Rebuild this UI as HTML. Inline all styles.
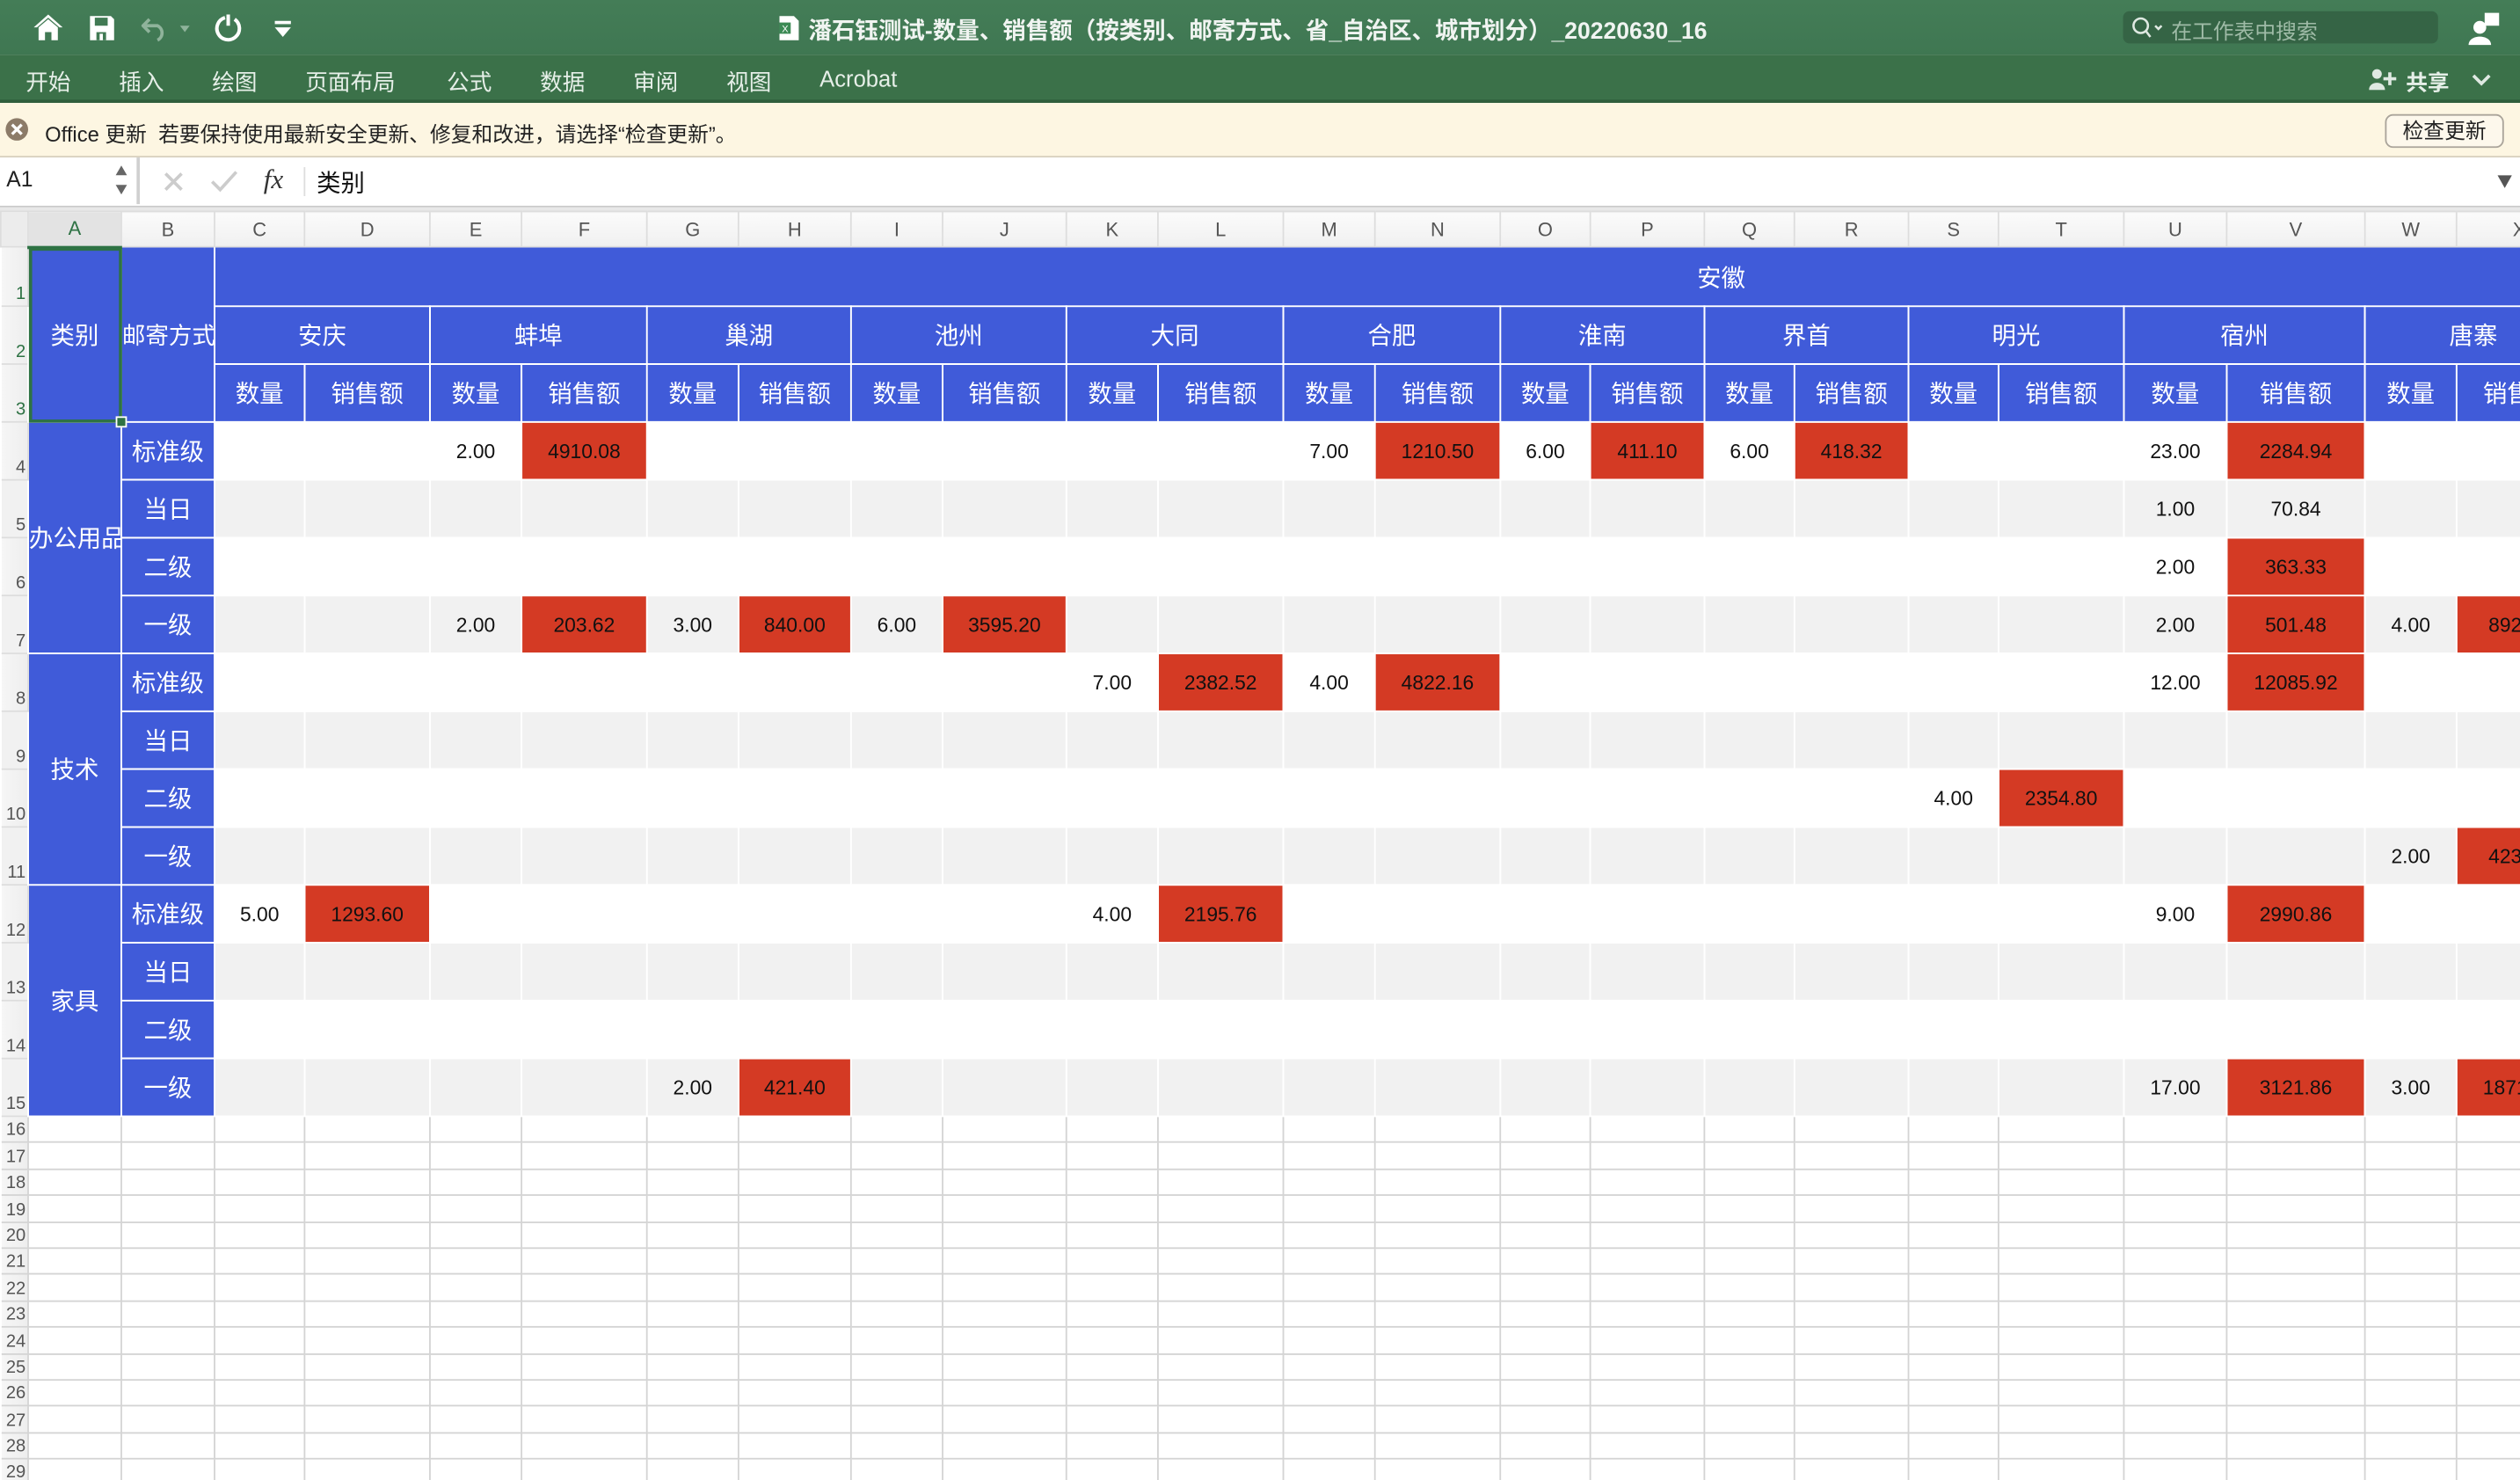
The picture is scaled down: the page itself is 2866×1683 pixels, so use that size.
<!DOCTYPE html>
<html><head><meta charset="utf-8">
<style>
html,body{margin:0;padding:0;width:2866px;height:1682px;overflow:hidden;background:#fff}
.s{position:absolute;left:0;top:0;width:1568px;height:921px;transform:scale(1.82781);transform-origin:0 0;overflow:hidden;font-family:"Liberation Sans","Noto Sans CJK SC",sans-serif}
.tb{position:absolute;left:0;top:0;width:1568px;height:34px;background:linear-gradient(#447d57,#3f7752)}
.rb{position:absolute;left:0;top:34px;width:1568px;height:28px;background:#3b7149;border-bottom:2px solid #2f5e3c}
.rb span{position:absolute;top:7px;color:#e6efe8;font-size:14px}
.mb{position:absolute;left:0;top:64px;width:1568px;height:33px;background:#fdf6e2;border-bottom:1px solid #d6cfbd;font-size:13px;color:#222}
.fb{position:absolute;left:0;top:98px;width:1568px;height:30px;background:#fff;border-bottom:1px solid #c9c9c9}
.gap{position:absolute;left:0;top:129px;width:1568px;height:2px;background:#e8e8e8}
table{position:absolute;left:0;top:131px;border-collapse:collapse;table-layout:fixed;width:1606px}
td{border:1px solid #fff;padding:0;text-align:center;font-size:12.5px;color:#111;overflow:hidden;white-space:nowrap;box-sizing:border-box}
tr.h td{background:linear-gradient(#fbfbfb,#f0f0f0);border:1px solid #ddd;color:#555;font-size:12px;height:22px}
td.rh{background:linear-gradient(90deg,#f6f6f6,#eee);border:1px solid #ddd;border-left:none;color:#555;font-size:11px;text-align:right;vertical-align:bottom;padding:0 1px 1px 0}
td.b{background:#405bd9;color:#fff;font-size:15px}
tr.g td{background:#f1f1f1}
tr.g td.b{background:#405bd9}
td.r{background:#d43a24!important}
tr.e td{height:16.4px;border:1px solid #d4d4d4}
tr.e td.rh{border-left:none}
tr.d td{height:36px}
</style></head><body><div class="s">
<div class="tb">
<svg style="position:absolute;left:20px;top:8px" width="20" height="18" viewBox="0 0 20 18"><path d="M10 1 L1 9 L3 9 L10 3 L17 9 L19 9 Z" fill="#fff"/><path d="M4 9 L10 4 L16 9 V17 H12 V12 H8 V17 H4 Z" fill="#fff"/></svg>
<svg style="position:absolute;left:55px;top:9px" width="17" height="17" viewBox="0 0 17 17"><path d="M1 1 H14 L16 3 V16 H1 Z" fill="#fff"/><rect x="4" y="2" width="8" height="5" fill="#417a54"/><rect x="5" y="11" width="6" height="5" fill="#417a54"/><rect x="7" y="12" width="2" height="4" fill="#fff"/></svg>
<svg style="position:absolute;left:88px;top:9px" width="32" height="17" viewBox="0 0 32 17"><path d="M5 3 L1 7 L5 11 M1 7 H10 A5 5 0 0 1 10 16" stroke="#8fb39b" stroke-width="2" fill="none"/><path d="M24 7 L30 7 L27 11Z" fill="#8fb39b"/></svg>
<svg style="position:absolute;left:132px;top:8px" width="20" height="20" viewBox="0 0 20 20"><path d="M8 3 A7 7 0 1 0 14 4 M10 1 V8" stroke="#fff" stroke-width="2.2" fill="none"/></svg>
<svg style="position:absolute;left:170px;top:12px" width="12" height="12" viewBox="0 0 12 12"><rect x="1" y="1" width="10" height="2" fill="#fff"/><path d="M1 5 H11 L6 11Z" fill="#fff"/></svg>
<svg style="position:absolute;left:484px;top:9px" width="14" height="17" viewBox="0 0 14 17"><path d="M1 1 H10 L13 4 V16 H1Z" fill="#fff"/><rect x="1" y="5" width="7" height="7" fill="#3c8a55"/><text x="2.5" y="11" font-size="6" fill="#fff" font-family="Liberation Sans">X</text></svg>
<div style="position:absolute;left:503px;top:8px;color:#f0f4f1;font-size:14.5px;font-weight:bold">潘石钰测试-数量、销售额（按类别、邮寄方式、省_自治区、城市划分）_20220630_16</div>
<div style="position:absolute;left:1321px;top:7px;width:196px;height:20px;background:#356445;border-radius:4px"></div>
<svg style="position:absolute;left:1326px;top:10px" width="22" height="14" viewBox="0 0 22 14"><circle cx="6" cy="6" r="4.5" stroke="#dfe9e2" stroke-width="1.4" fill="none"/><path d="M9 9 L12 13 M15 6 L17 8 L19 6" stroke="#dfe9e2" stroke-width="1.4" fill="none"/></svg>
<div style="position:absolute;left:1351px;top:9px;color:#9fbba7;font-size:13px">在工作表中搜索</div>
<svg style="position:absolute;left:1535px;top:7px" width="22" height="22" viewBox="0 0 22 22"><rect x="11" y="1" width="9" height="8" fill="#fff"/><circle cx="8" cy="10" r="4" fill="#fff"/><path d="M1 21 C1 14 15 14 15 21Z" fill="#fff"/></svg>
</div>
<div class="rb">
<span style="left:16px">开始</span><span style="left:74px">插入</span><span style="left:132px">绘图</span><span style="left:190px">页面布局</span><span style="left:278px">公式</span><span style="left:336px">数据</span><span style="left:394px">审阅</span><span style="left:452px">视图</span><span style="left:510px">Acrobat</span>
<svg style="position:absolute;left:1474px;top:8px" width="20" height="14" viewBox="0 0 20 14"><circle cx="5" cy="4" r="3" fill="#dfe9e2"/><path d="M0 14 C0 8 10 8 10 14Z" fill="#dfe9e2"/><path d="M13 3 V11 M9 7 H17" stroke="#dfe9e2" stroke-width="2"/></svg>
<span style="left:1497px;top:6px;font-weight:bold;font-size:13.5px">共享</span>
<svg style="position:absolute;left:1538px;top:12px" width="12" height="8" viewBox="0 0 12 8"><path d="M1 1 L6 6 L11 1" stroke="#dfe9e2" stroke-width="2" fill="none"/></svg>
</div>
<div class="mb">
<svg style="position:absolute;left:3px;top:9px" width="15" height="15" viewBox="0 0 15 15"><circle cx="7.5" cy="7.5" r="7" fill="#8c7b68"/><path d="M4.5 4.5 L10.5 10.5 M10.5 4.5 L4.5 10.5" stroke="#fff" stroke-width="1.8"/></svg>
<div style="position:absolute;left:28px;top:9px">Office 更新&nbsp;&nbsp;若要保持使用最新安全更新、修复和改进，请选择“检查更新”。</div>
<div style="position:absolute;left:1484px;top:7px;width:72px;height:19px;border:1px solid #aaa49a;border-radius:5px;background:#fdf8ec;text-align:center;line-height:19px">检查更新</div>
</div>
<div class="fb">
<div style="position:absolute;left:0;top:0;width:85px;height:29px;border-right:2px solid #d0d0d0"></div>
<div style="position:absolute;left:4px;top:6px;font-size:13.5px;color:#222">A1</div>
<svg style="position:absolute;left:71px;top:3px" width="9" height="22" viewBox="0 0 9 22"><path d="M4.5 2 L8 8 H1Z M1 14 H8 L4.5 20Z" fill="#666"/></svg>
<svg style="position:absolute;left:101px;top:8px" width="14" height="14" viewBox="0 0 14 14"><path d="M2 2 L12 12 M12 2 L2 12" stroke="#ccc" stroke-width="2"/></svg>
<svg style="position:absolute;left:131px;top:8px" width="17" height="14" viewBox="0 0 17 14"><path d="M1 7 L6 12 L16 1" stroke="#ccc" stroke-width="2" fill="none"/></svg>
<div style="position:absolute;left:164px;top:4px;font-family:'Liberation Serif',serif;font-style:italic;font-size:17px;color:#333">fx</div>
<div style="position:absolute;left:189px;top:6px;width:1px;height:18px;background:#ddd"></div>
<div style="position:absolute;left:197px;top:5px;font-size:15px;color:#111">类别</div>
<svg style="position:absolute;left:1554px;top:11px" width="9" height="8" viewBox="0 0 9 8"><path d="M0 0 H9 L4.5 8Z" fill="#555"/></svg>
</div>
<div class="gap"></div>
<table>
<colgroup><col style="width:17px"><col style="width:58px"><col style="width:58px"><col style="width:56px"><col style="width:78px"><col style="width:57px"><col style="width:78px"><col style="width:57px"><col style="width:70px"><col style="width:57px"><col style="width:77px"><col style="width:57px"><col style="width:78px"><col style="width:57px"><col style="width:78px"><col style="width:56px"><col style="width:71px"><col style="width:56px"><col style="width:71px"><col style="width:56px"><col style="width:78px"><col style="width:64px"><col style="width:86px"><col style="width:57px"><col style="width:78px"></colgroup>
<tr class="h"><td style="background:#ececec"></td><td style="color:#2e7244;background:#e3e3e3;border-bottom:2px solid #2e7244">A</td><td>B</td><td>C</td><td>D</td><td>E</td><td>F</td><td>G</td><td>H</td><td>I</td><td>J</td><td>K</td><td>L</td><td>M</td><td>N</td><td>O</td><td>P</td><td>Q</td><td>R</td><td>S</td><td>T</td><td>U</td><td>V</td><td>W</td><td>X</td></tr>
<tr style="height:37px"><td class="rh" style="color:#2e7244">1</td><td class="b" rowspan="3" style="outline:2px solid #2e7244;outline-offset:-2px">类别</td><td class="b" rowspan="3" style="font-size:14.5px">邮寄方式</td><td class="b" colspan="22" style="padding-left:402px">安徽</td></tr>
<tr style="height:36px"><td class="rh" style="color:#2e7244">2</td><td class="b" colspan="2">安庆</td><td class="b" colspan="2">蚌埠</td><td class="b" colspan="2">巢湖</td><td class="b" colspan="2">池州</td><td class="b" colspan="2">大同</td><td class="b" colspan="2">合肥</td><td class="b" colspan="2">淮南</td><td class="b" colspan="2">界首</td><td class="b" colspan="2">明光</td><td class="b" colspan="2">宿州</td><td class="b" colspan="2">唐寨</td></tr>
<tr style="height:36px"><td class="rh" style="color:#2e7244">3</td><td class="b">数量</td><td class="b">销售额</td><td class="b">数量</td><td class="b">销售额</td><td class="b">数量</td><td class="b">销售额</td><td class="b">数量</td><td class="b">销售额</td><td class="b">数量</td><td class="b">销售额</td><td class="b">数量</td><td class="b">销售额</td><td class="b">数量</td><td class="b">销售额</td><td class="b">数量</td><td class="b">销售额</td><td class="b">数量</td><td class="b">销售额</td><td class="b">数量</td><td class="b">销售额</td><td class="b">数量</td><td class="b">销售额</td></tr>
<tr class="d"><td class="rh">4</td><td class="b" rowspan="4">办公用品</td><td class="b">标准级</td><td></td><td></td><td>2.00</td><td class="r">4910.08</td><td></td><td></td><td></td><td></td><td></td><td></td><td>7.00</td><td class="r">1210.50</td><td>6.00</td><td class="r">411.10</td><td>6.00</td><td class="r">418.32</td><td></td><td></td><td>23.00</td><td class="r">2284.94</td><td></td><td></td></tr>
<tr class="d g"><td class="rh">5</td><td class="b">当日</td><td></td><td></td><td></td><td></td><td></td><td></td><td></td><td></td><td></td><td></td><td></td><td></td><td></td><td></td><td></td><td></td><td></td><td></td><td>1.00</td><td>70.84</td><td></td><td></td></tr>
<tr class="d"><td class="rh">6</td><td class="b">二级</td><td></td><td></td><td></td><td></td><td></td><td></td><td></td><td></td><td></td><td></td><td></td><td></td><td></td><td></td><td></td><td></td><td></td><td></td><td>2.00</td><td class="r">363.33</td><td></td><td></td></tr>
<tr class="d g"><td class="rh">7</td><td class="b">一级</td><td></td><td></td><td>2.00</td><td class="r">203.62</td><td>3.00</td><td class="r">840.00</td><td>6.00</td><td class="r">3595.20</td><td></td><td></td><td></td><td></td><td></td><td></td><td></td><td></td><td></td><td></td><td>2.00</td><td class="r">501.48</td><td>4.00</td><td class="r">892.80</td></tr>
<tr class="d"><td class="rh">8</td><td class="b" rowspan="4">技术</td><td class="b">标准级</td><td></td><td></td><td></td><td></td><td></td><td></td><td></td><td></td><td>7.00</td><td class="r">2382.52</td><td>4.00</td><td class="r">4822.16</td><td></td><td></td><td></td><td></td><td></td><td></td><td>12.00</td><td class="r">12085.92</td><td></td><td></td></tr>
<tr class="d g"><td class="rh">9</td><td class="b">当日</td><td></td><td></td><td></td><td></td><td></td><td></td><td></td><td></td><td></td><td></td><td></td><td></td><td></td><td></td><td></td><td></td><td></td><td></td><td></td><td></td><td></td><td></td></tr>
<tr class="d"><td class="rh">10</td><td class="b">二级</td><td></td><td></td><td></td><td></td><td></td><td></td><td></td><td></td><td></td><td></td><td></td><td></td><td></td><td></td><td></td><td></td><td>4.00</td><td class="r">2354.80</td><td></td><td></td><td></td><td></td></tr>
<tr class="d g"><td class="rh">11</td><td class="b">一级</td><td></td><td></td><td></td><td></td><td></td><td></td><td></td><td></td><td></td><td></td><td></td><td></td><td></td><td></td><td></td><td></td><td></td><td></td><td></td><td></td><td>2.00</td><td class="r">423.80</td></tr>
<tr class="d"><td class="rh">12</td><td class="b" rowspan="4">家具</td><td class="b">标准级</td><td>5.00</td><td class="r">1293.60</td><td></td><td></td><td></td><td></td><td></td><td></td><td>4.00</td><td class="r">2195.76</td><td></td><td></td><td></td><td></td><td></td><td></td><td></td><td></td><td>9.00</td><td class="r">2990.86</td><td></td><td></td></tr>
<tr class="d g"><td class="rh">13</td><td class="b">当日</td><td></td><td></td><td></td><td></td><td></td><td></td><td></td><td></td><td></td><td></td><td></td><td></td><td></td><td></td><td></td><td></td><td></td><td></td><td></td><td></td><td></td><td></td></tr>
<tr class="d"><td class="rh">14</td><td class="b">二级</td><td></td><td></td><td></td><td></td><td></td><td></td><td></td><td></td><td></td><td></td><td></td><td></td><td></td><td></td><td></td><td></td><td></td><td></td><td></td><td></td><td></td><td></td></tr>
<tr class="d g"><td class="rh">15</td><td class="b">一级</td><td></td><td></td><td></td><td></td><td>2.00</td><td class="r">421.40</td><td></td><td></td><td></td><td></td><td></td><td></td><td></td><td></td><td></td><td></td><td></td><td></td><td>17.00</td><td class="r">3121.86</td><td>3.00</td><td class="r">1871.20</td></tr>
<tr class="e"><td class="rh">16</td><td></td><td></td><td></td><td></td><td></td><td></td><td></td><td></td><td></td><td></td><td></td><td></td><td></td><td></td><td></td><td></td><td></td><td></td><td></td><td></td><td></td><td></td><td></td><td></td></tr>
<tr class="e"><td class="rh">17</td><td></td><td></td><td></td><td></td><td></td><td></td><td></td><td></td><td></td><td></td><td></td><td></td><td></td><td></td><td></td><td></td><td></td><td></td><td></td><td></td><td></td><td></td><td></td><td></td></tr>
<tr class="e"><td class="rh">18</td><td></td><td></td><td></td><td></td><td></td><td></td><td></td><td></td><td></td><td></td><td></td><td></td><td></td><td></td><td></td><td></td><td></td><td></td><td></td><td></td><td></td><td></td><td></td><td></td></tr>
<tr class="e"><td class="rh">19</td><td></td><td></td><td></td><td></td><td></td><td></td><td></td><td></td><td></td><td></td><td></td><td></td><td></td><td></td><td></td><td></td><td></td><td></td><td></td><td></td><td></td><td></td><td></td><td></td></tr>
<tr class="e"><td class="rh">20</td><td></td><td></td><td></td><td></td><td></td><td></td><td></td><td></td><td></td><td></td><td></td><td></td><td></td><td></td><td></td><td></td><td></td><td></td><td></td><td></td><td></td><td></td><td></td><td></td></tr>
<tr class="e"><td class="rh">21</td><td></td><td></td><td></td><td></td><td></td><td></td><td></td><td></td><td></td><td></td><td></td><td></td><td></td><td></td><td></td><td></td><td></td><td></td><td></td><td></td><td></td><td></td><td></td><td></td></tr>
<tr class="e"><td class="rh">22</td><td></td><td></td><td></td><td></td><td></td><td></td><td></td><td></td><td></td><td></td><td></td><td></td><td></td><td></td><td></td><td></td><td></td><td></td><td></td><td></td><td></td><td></td><td></td><td></td></tr>
<tr class="e"><td class="rh">23</td><td></td><td></td><td></td><td></td><td></td><td></td><td></td><td></td><td></td><td></td><td></td><td></td><td></td><td></td><td></td><td></td><td></td><td></td><td></td><td></td><td></td><td></td><td></td><td></td></tr>
<tr class="e"><td class="rh">24</td><td></td><td></td><td></td><td></td><td></td><td></td><td></td><td></td><td></td><td></td><td></td><td></td><td></td><td></td><td></td><td></td><td></td><td></td><td></td><td></td><td></td><td></td><td></td><td></td></tr>
<tr class="e"><td class="rh">25</td><td></td><td></td><td></td><td></td><td></td><td></td><td></td><td></td><td></td><td></td><td></td><td></td><td></td><td></td><td></td><td></td><td></td><td></td><td></td><td></td><td></td><td></td><td></td><td></td></tr>
<tr class="e"><td class="rh">26</td><td></td><td></td><td></td><td></td><td></td><td></td><td></td><td></td><td></td><td></td><td></td><td></td><td></td><td></td><td></td><td></td><td></td><td></td><td></td><td></td><td></td><td></td><td></td><td></td></tr>
<tr class="e"><td class="rh">27</td><td></td><td></td><td></td><td></td><td></td><td></td><td></td><td></td><td></td><td></td><td></td><td></td><td></td><td></td><td></td><td></td><td></td><td></td><td></td><td></td><td></td><td></td><td></td><td></td></tr>
<tr class="e"><td class="rh">28</td><td></td><td></td><td></td><td></td><td></td><td></td><td></td><td></td><td></td><td></td><td></td><td></td><td></td><td></td><td></td><td></td><td></td><td></td><td></td><td></td><td></td><td></td><td></td><td></td></tr>
<tr class="e"><td class="rh">29</td><td></td><td></td><td></td><td></td><td></td><td></td><td></td><td></td><td></td><td></td><td></td><td></td><td></td><td></td><td></td><td></td><td></td><td></td><td></td><td></td><td></td><td></td><td></td><td></td></tr>
</table>
<div style="position:absolute;left:72px;top:259px;width:5px;height:5px;background:#2e7244;border:1px solid #fff"></div>
</div></body></html>
